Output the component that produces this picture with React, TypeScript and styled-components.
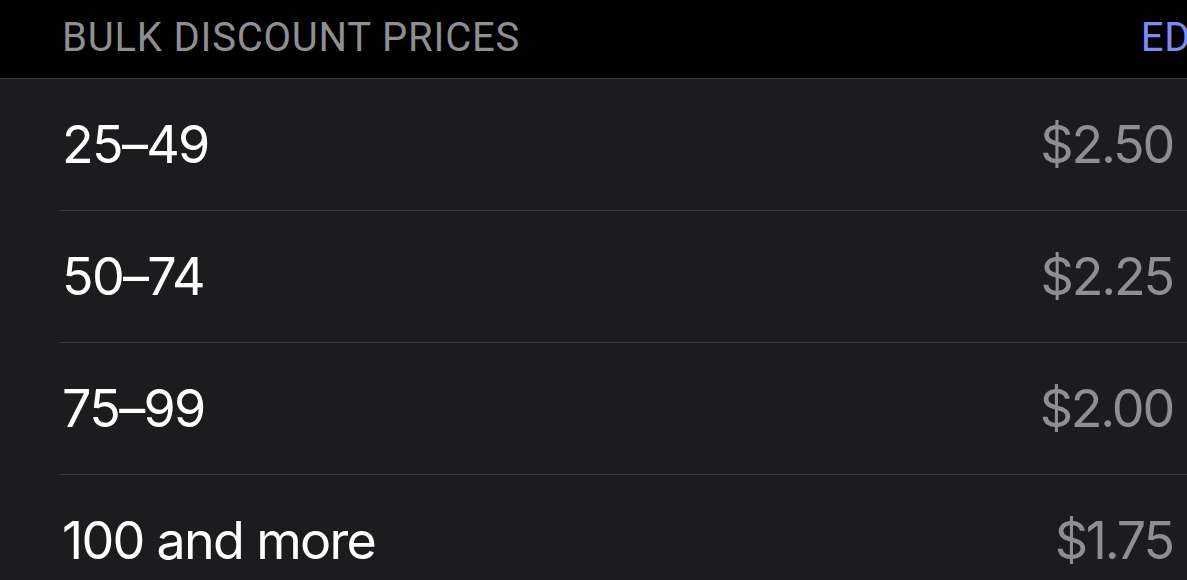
import React from "react";
import styled, { createGlobalStyle } from "styled-components";

const Global = createGlobalStyle`
  html, body { margin: 0; padding: 0; background: #1c1c1e; overflow: hidden; }
  #root { width: 1187px; height: 580px; overflow: hidden; }
`;

const Page = styled.div`
  width: 1187px;
  height: 580px;
  background: #1c1c1e;
  overflow: hidden;
`;

const Header = styled.div`
  height: 78px;
  background: #000;
  border-bottom: 1px solid #3a3a3c;
  display: flex;
  align-items: center;
  justify-content: space-between;
  padding-left: 62px;
  overflow: hidden;
  white-space: nowrap;
`;

const HeaderTitle = styled.span`
  font-family: Roboto, "Liberation Sans", sans-serif;
  font-size: 40px;
  color: #8e8e93;
  letter-spacing: 0.8px;
  margin-top: -4px;
`;

const EditButton = styled.span`
  font-family: Roboto, "Liberation Sans", sans-serif;
  font-size: 40px;
  color: #7b8cf5;
  letter-spacing: 0.8px;
  margin-right: -40px;
  margin-top: -4px;
`;

const Row = styled.div<{ $last?: boolean }>`
  margin-left: 60px;
  height: 131px;
  border-bottom: ${(p) => (p.$last ? "none" : "1px solid #3a3a3c")};
  display: flex;
  align-items: center;
  justify-content: space-between;
  padding-left: 2px;
  padding-right: 14px;
`;

const Label = styled.span`
  font-family: Inter, "Liberation Sans", sans-serif;
  font-size: 52px;
  letter-spacing: -1.7px;
  color: #ffffff;
`;

const Price = styled.span`
  font-family: Inter, "Liberation Sans", sans-serif;
  font-size: 52px;
  letter-spacing: -2.2px;
  color: #8e8e93;
`;

const rows = [
  { label: "25–49", price: "$2.50" },
  { label: "50–74", price: "$2.25" },
  { label: "75–99", price: "$2.00" },
  { label: "100 and more", price: "$1.75" },
];

export default function App() {
  return (
    <Page>
      <Global />
      <Header>
        <HeaderTitle>BULK DISCOUNT PRICES</HeaderTitle>
        <EditButton>EDIT</EditButton>
      </Header>
      {rows.map((r, i) => (
        <Row key={r.label} $last={i === rows.length - 1}>
          <Label>{r.label}</Label>
          <Price>{r.price}</Price>
        </Row>
      ))}
    </Page>
  );
}
